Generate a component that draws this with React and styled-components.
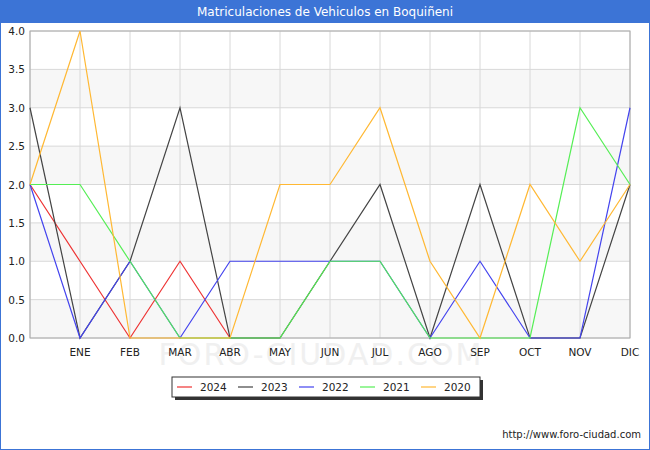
import React from "react";
import styled, { createGlobalStyle } from "styled-components";

const Global = createGlobalStyle`
  body { margin: 0; font-family: "DejaVu Sans", Verdana, sans-serif; }
`;

const Frame = styled.div`
  width: 648px;
  height: 448px;
  border: 1px solid #3c74d6;
  background: #fff;
  display: flex;
  flex-direction: column;
`;

const Title = styled.div`
  height: 22px;
  background: #3c74d6;
  color: #fff;
  font-size: 12px;
  display: flex;
  align-items: center;
  justify-content: center;
`;

const Body = styled.div`
  flex: 1;
  position: relative;
`;

const Footer = styled.div`
  position: absolute;
  right: 8px;
  bottom: 9px;
  font-size: 10px;
  color: #222;
`;

const months = ["", "ENE", "FEB", "MAR", "ABR", "MAY", "JUN", "JUL", "AGO", "SEP", "OCT", "NOV", "DIC"];
const series = [
  { name: "2024", color: "#ee3333", d: [2, 1, 0, 1, 0] },
  { name: "2023", color: "#444444", d: [3, 0, 1, 3, 0, 0, 1, 2, 0, 2, 0, 0, 2] },
  { name: "2022", color: "#4444ee", d: [2, 0, 1, 0, 1, 1, 1, 1, 0, 1, 0, 0, 3] },
  { name: "2021", color: "#55ee55", d: [2, 2, 1, 0, 0, 0, 1, 1, 0, 0, 0, 3, 2] },
  { name: "2020", color: "#ffb833", d: [2, 4, 0, 0, 0, 2, 2, 3, 1, 0, 2, 1, 2] },
];

const X0 = 29, X1 = 629, Y0 = 8, Y1 = 315;
const xs = (i) => X0 + i * 50;
const ys = (v) => Y1 - (v * (Y1 - Y0)) / 4;

export default function App() {
  return (
    <>
      <Global />
      <Frame>
        <Title>Matriculaciones de Vehiculos en Boquiñeni</Title>
        <Body>
          <svg width="648" height="425" style={{ display: "block" }}>
            {[0, 1, 2, 3, 4, 5, 6, 7].map((k) =>
              k % 2 === 0 ? (
                <rect key={"b" + k} x={X0} y={ys((k + 1) * 0.5)} width={X1 - X0} height={(Y1 - Y0) / 8} fill="#f7f7f7" />
              ) : null
            )}
            {months.map((m, i) => (
              <line key={"v" + i} x1={xs(i)} x2={xs(i)} y1={Y0} y2={Y1} stroke="#d8d8d8" />
            ))}
            {[0, 1, 2, 3, 4, 5, 6, 7, 8].map((k) => (
              <g key={"h" + k}>
                <line x1={X0} x2={X1} y1={ys(k * 0.5)} y2={ys(k * 0.5)} stroke="#d8d8d8" />
                <text x={X0 - 5} y={ys(k * 0.5) + 4} fontSize="10.5" textAnchor="end" fill="#222">
                  {(k * 0.5).toFixed(1)}
                </text>
              </g>
            ))}
            <rect x={X0} y={Y0} width={X1 - X0} height={Y1 - Y0} fill="none" stroke="#aaa" />
            <text x="320" y="342" fontSize="30" fill="#f0f0f0" textAnchor="middle" letterSpacing="2">FORO-CIUDAD.COM</text>
            {months.map((m, i) => (
              <text key={"m" + i} x={xs(i)} y={333} fontSize="10.5" textAnchor="middle" fill="#222">{m}</text>
            ))}
            {series.map((s) => (
              <polyline key={s.name} fill="none" stroke={s.color} strokeWidth="1.2"
                points={s.d.map((v, i) => `${xs(i)},${ys(v)}`).join(" ")} />
            ))}
            <rect x="174" y="357" width="308" height="20" fill="#333" />
            <rect x="171" y="354" width="308" height="20" fill="#fff" stroke="#333" />
            {series.map((s, i) => {
              const lx = 176 + i * 61;
              return (
                <g key={s.name}>
                  <line x1={lx} x2={lx + 15} y1={364} y2={364} stroke={s.color} strokeWidth="1.2" />
                  <text x={lx + 23} y={368} fontSize="10.5" fill="#222">{s.name}</text>
                </g>
              );
            })}
          </svg>
          <Footer>http://www.foro-ciudad.com</Footer>
        </Body>
      </Frame>
    </>
  );
}
